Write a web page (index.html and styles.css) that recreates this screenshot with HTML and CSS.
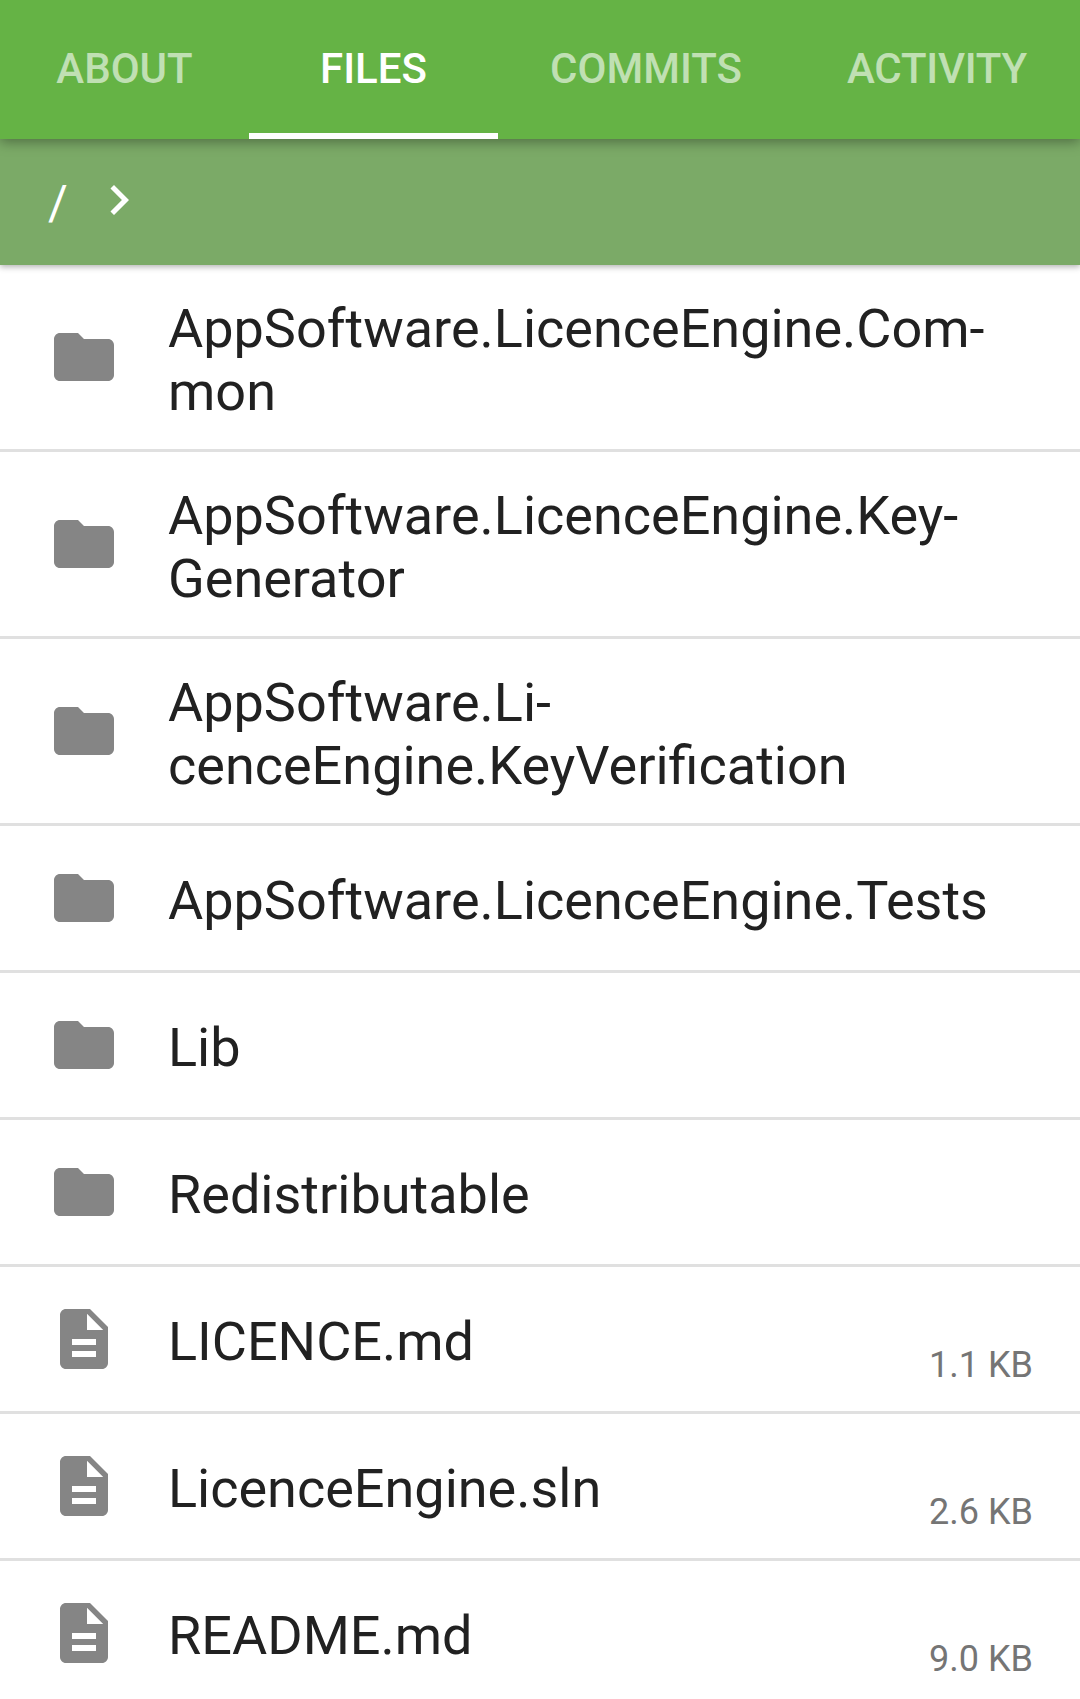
FILE: index.html
```html
<!DOCTYPE html>
<html lang="en">
<head>
<meta charset="utf-8">
<title>Files</title>
<link rel="stylesheet" href="styles.css">
</head>
<body>
<svg class="sprite" aria-hidden="true">
  <symbol id="folder" viewBox="0 0 24 24"><path d="M10 4H4c-1.100 0-2 .9-2 2v12c0 1.100.9 2 2 2h16c1.100 0 2-.9 2-2V8c0-1.100-.9-2-2-2h-8l-2-2z"/></symbol>
  <symbol id="file" viewBox="0 0 24 24"><path d="M14 2H6c-1.100 0-2 .9-2 2v16c0 1.100.9 2 2 2h12c1.100 0 2-.9 2-2V8l-6-6zm2 16H8v-2h8v2zm0-4H8v-2h8v2zm-3-5V3.600L18.400 9H13z"/></symbol>
</svg>
<nav class="tabs">
  <a class="tab">ABOUT</a>
  <a class="tab tab-active">FILES</a>
  <a class="tab">COMMITS</a>
  <a class="tab tab-last">ACTIVITY</a>
</nav>
<div class="breadcrumb">
  <span class="crumb">/</span>
  <svg class="chevron" viewBox="0 0 24 24"><path d="M10 6L8.590 7.410 13.170 12l-4.580 4.590L10 18l6-6z"/></svg>
</div>
<ul class="list">
  <li class="row"><svg class="icon"><use href="#folder"/></svg><span class="name">AppSoftware.LicenceEngine.Com-<br>mon</span></li>
  <li class="row"><svg class="icon"><use href="#folder"/></svg><span class="name">AppSoftware.LicenceEngine.Key-<br>Generator</span></li>
  <li class="row"><svg class="icon"><use href="#folder"/></svg><span class="name">AppSoftware.Li-<br>cenceEngine.KeyVerification</span></li>
  <li class="row"><svg class="icon"><use href="#folder"/></svg><span class="name">AppSoftware.LicenceEngine.Tests</span></li>
  <li class="row"><svg class="icon"><use href="#folder"/></svg><span class="name">Lib</span></li>
  <li class="row"><svg class="icon"><use href="#folder"/></svg><span class="name">Redistributable</span></li>
  <li class="row"><svg class="icon"><use href="#file"/></svg><span class="name">LICENCE.md</span><span class="size">1.1 KB</span></li>
  <li class="row"><svg class="icon"><use href="#file"/></svg><span class="name">LicenceEngine.sln</span><span class="size">2.6 KB</span></li>
  <li class="row"><svg class="icon"><use href="#file"/></svg><span class="name">README.md</span><span class="size">9.0 KB</span></li>
</ul>
</body>
</html>
```
FILE: styles.css
```css
* { box-sizing: border-box; }

body {
  margin: 0;
  height: 1699px;
  overflow: hidden;
  display: flex;
  flex-direction: column;
  background: #fff;
  color: #212121;
  font-family: Roboto, sans-serif;
}

.sprite { display: none; }

.tabs {
  position: relative;
  z-index: 2;
  flex: none;
  display: grid;
  grid-template-columns: 249px 249px 296px 286px;
  height: 139px;
  background: #65b345;
  box-shadow: 0 3px 12px rgba(0, 0, 0, .36);
}

.tab {
  padding-top: 44px;
  border-bottom: 6px solid transparent;
  color: rgba(255, 255, 255, .6);
  font-size: 42px;
  font-weight: 500;
  line-height: 49px;
  text-align: center;
}

.tab-active {
  color: #fff;
  border-bottom-color: #fff;
}

.tab-last { letter-spacing: -.25px; }

.breadcrumb {
  position: relative;
  z-index: 1;
  flex: none;
  display: flex;
  align-items: center;
  height: 126px;
  padding: 0 48px 4px;
  background: #7baa67;
  color: #fff;
  font-size: 48px;
  box-shadow: 0 2px 6px rgba(0, 0, 0, .3);
}

.crumb {
  width: 41px;
  padding-top: 6px;
  line-height: 56px;
}

.chevron {
  width: 60px;
  height: 60px;
  fill: #fff;
}

.list {
  margin: 0;
  padding: 0;
  list-style: none;
}

.row {
  display: flex;
  align-items: center;
  gap: 48px;
  min-height: 147px;
  padding: 24px 47px 24px 48px;
  border-bottom: 3px solid #e0e0e0;
}

.icon {
  flex: none;
  width: 72px;
  height: 72px;
  fill: #858585;
}

.name {
  flex: 1;
  padding: 7.6px 0 2.4px;
  font-size: 54px;
  line-height: 63px;
  white-space: nowrap;
}

.size {
  align-self: flex-end;
  margin-bottom: 1px;
  color: #757575;
  font-size: 36px;
  line-height: 42px;
}
```
